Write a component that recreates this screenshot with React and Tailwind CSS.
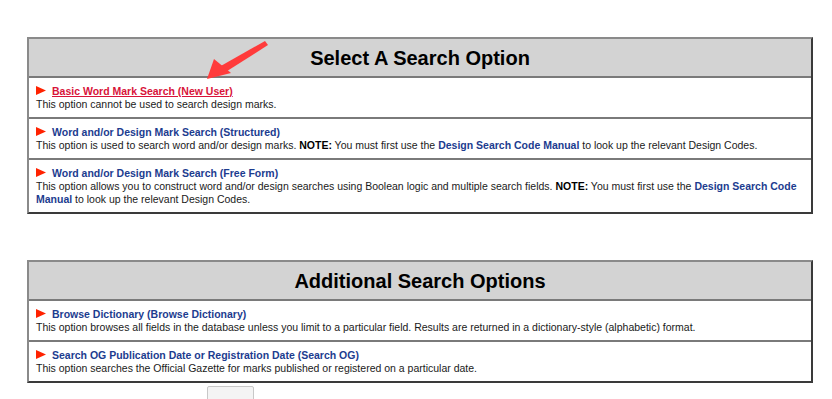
import React from 'react';

function Bullet() {
  return (
    <svg width="10" height="10" viewBox="0 0 10 10" className="inline-block mr-[6px] -mt-[2px] align-middle">
      <polygon points="0,0 10,4.5 0,9" fill="#ff2200" />
    </svg>
  );
}

function Option({ title, red, children }) {
  return (
    <div className="border-t-2 border-[#7a7a7a] pl-[7px] pr-[6px] pt-[7px] pb-[6px] leading-[13px] text-[10.5px] text-[#1a1a1a]">
      <div>
        <Bullet />
        <span
          className={
            red
              ? 'font-bold text-[#d8143a] underline decoration-[#d8143a]'
              : 'font-bold text-[#1c3c8f]'
          }
        >
          {title}
        </span>
      </div>
      <div>{children}</div>
    </div>
  );
}

function Panel({ heading, children }) {
  return (
    <div className="border-2 border-t-[#8a8a8a] border-l-[#8a8a8a] border-r-[#3a3a3a] border-b-[#3a3a3a] bg-white">
      <div className="bg-[#d3d3d3] h-[37px] flex items-center justify-center text-[20px] font-bold text-black">
        {heading}
      </div>
      {children}
    </div>
  );
}

const Blue = ({ children }) => <span className="font-bold text-[#1c3c8f]">{children}</span>;

export default function App() {
  return (
    <div
      className="relative w-[832px] h-[399px] bg-white overflow-hidden"
      style={{ fontFamily: '"Liberation Sans", Arial, sans-serif' }}
    >
      <div className="ml-[27px] w-[786px] pt-[37px]">
        <Panel heading="Select A Search Option">
          <Option title="Basic Word Mark Search (New User)" red>
            This option cannot be used to search design marks.
          </Option>
          <Option title="Word and/or Design Mark Search (Structured)">
            This option is used to search word and/or design marks. <b className="text-black">NOTE:</b> You must first use the{' '}
            <Blue>Design Search Code Manual</Blue> to look up the relevant Design Codes.
          </Option>
          <Option title="Word and/or Design Mark Search (Free Form)">
            This option allows you to construct word and/or design searches using Boolean logic and multiple search fields.{' '}
            <b className="text-black">NOTE:</b> You must first use the <Blue>Design Search Code Manual</Blue> to look up the
            relevant Design Codes.
          </Option>
        </Panel>

        <div className="h-[46px]" />

        <Panel heading="Additional Search Options">
          <Option title="Browse Dictionary (Browse Dictionary)">
            This option browses all fields in the database unless you limit to a particular field. Results are returned in a
            dictionary-style (alphabetic) format.
          </Option>
          <Option title="Search OG Publication Date or Registration Date (Search OG)">
            This option searches the Official Gazette for marks published or registered on a particular date.
          </Option>
        </Panel>

        <div className="ml-[180px] mt-[3px] w-[47px] h-[20px] border border-[#c8c8c8] rounded-[2px] bg-[#f4f4f4]" />
      </div>

      <svg className="absolute left-0 top-0 pointer-events-none" width="832" height="399">
        <polygon points="265,41 268,45 224,73 219,67" fill="#ff3b3b" />
        <polygon points="207,79 214,59 231,73" fill="#ff3b3b" />
      </svg>
    </div>
  );
}
